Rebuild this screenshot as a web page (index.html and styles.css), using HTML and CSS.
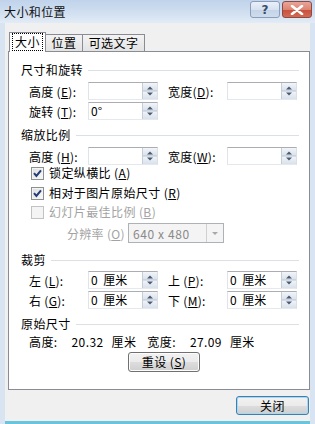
FILE: index.html
```html
<!DOCTYPE html>
<html lang="zh-CN">
<head>
  <meta charset="UTF-8" />
  <title>大小和位置</title>
  <link rel="stylesheet" href="styles.css">
</head>
<body>
  <div class="window">
    <div class="titlebar">
      <span class="title">大小和位置</span>
      <div class="caption-btns">
        <div class="cap help">?</div>
        <div class="cap close">
          <svg width="14" height="10" viewBox="0 0 14 10"><path d="M2 1 L12 9 M12 1 L2 9" stroke="#fff" stroke-width="2.6" stroke-linecap="round"/></svg>
        </div>
      </div>
    </div>

    <div class="client">
      <div class="tabs">
        <div class="tab active"><span class="focus">大小</span></div>
        <div class="tab t2">位置</div>
        <div class="tab t3">可选文字</div>
      </div>

      <div class="panel">
        <div class="group-title"><span>尺寸和旋转</span><i class="line"></i></div>
        <div class="row first">
          <label>高度 (<u>E</u>):</label>
          <div class="spin"><span class="val"></span><span class="arrows"></span></div>
          <label class="second">宽度(<u>D</u>):</label>
          <div class="spin"><span class="val"></span><span class="arrows"></span></div>
        </div>
        <div class="row">
          <label>旋转 (<u>T</u>):</label>
          <div class="spin"><span class="val">0°</span><span class="arrows"></span></div>
        </div>

        <div class="group-title g2"><span>缩放比例</span><i class="line"></i></div>
        <div class="row h-row">
          <label>高度 (<u>H</u>):</label>
          <div class="spin"><span class="val"></span><span class="arrows"></span></div>
          <label class="second">宽度(<u>W</u>):</label>
          <div class="spin"><span class="val"></span><span class="arrows"></span></div>
        </div>
        <div class="check-row cb1"><span class="cbox checked"></span>锁定纵横比 (<u>A</u>)</div>
        <div class="check-row cb2"><span class="cbox checked"></span>相对于图片原始尺寸 (<u>R</u>)</div>
        <div class="check-row cb3 disabled"><span class="cbox"></span>幻灯片最佳比例 (<u>B</u>)</div>
        <div class="res-row disabled">
          <label>分辨率 (<u>O</u>)</label>
          <div class="combo"><span class="val">640 x 480</span><span class="drop"></span></div>
        </div>

        <div class="group-title g3"><span>裁剪</span><i class="line"></i></div>
        <div class="row crop1">
          <label>左 (<u>L</u>):</label>
          <div class="spin"><span class="val">0 厘米</span><span class="arrows"></span></div>
          <label class="second">上 (<u>P</u>):</label>
          <div class="spin"><span class="val">0 厘米</span><span class="arrows"></span></div>
        </div>
        <div class="row crop2">
          <label>右 (<u>G</u>):</label>
          <div class="spin"><span class="val">0 厘米</span><span class="arrows"></span></div>
          <label class="second">下 (<u>M</u>):</label>
          <div class="spin"><span class="val">0 厘米</span><span class="arrows"></span></div>
        </div>

        <div class="group-title g4"><span>原始尺寸</span><i class="line"></i></div>
        <div class="info">
          <span>高度:</span><span class="num">20.32</span><span class="unit">厘米</span>
          <span class="w">宽度:</span><span class="num">27.09</span><span class="unit">厘米</span>
        </div>
        <div class="btn reset">重设 (<u>S</u>)</div>
      </div>

      <div class="footer">
        <div class="btn close-btn">关闭</div>
      </div>
    </div>
  </div>
</body>
</html>
```

FILE: styles.css
```css
* {
  margin: 0;
  padding: 0;
  box-sizing: border-box;
}
body {
  width: 315px;
  height: 424px;
  overflow: hidden;
  font-family: "Noto Sans CJK SC", sans-serif;
  font-size: 12px;
  color: #000;
}
u {
  text-decoration: underline;
}
.window {
  width: 315px;
  height: 424px;
  display: flex;
  flex-direction: column;
  background: #f0f0f0;
  box-shadow: inset 5px 0 #d8e4f2, inset -5px 0 #d8e4f2, inset 0 -3px #69c4de;
}

/* title bar */
.titlebar {
  height: 23px;
  display: flex;
  align-items: flex-start;
  background: linear-gradient(to bottom, #c0d3eb 0%, #d2e0f1 60%, #e3ecf6 100%);
}
.title {
  margin: 4px 0 0 4px;
  line-height: 16px;
  letter-spacing: 0.4px;
  color: #111;
}
.caption-btns {
  margin-left: auto;
  margin-right: 3px;
  margin-top: 1px;
  display: flex;
  gap: 2px;
}
.cap {
  width: 30px;
  height: 17px;
  border-radius: 3px;
  display: flex;
  align-items: center;
  justify-content: center;
}
.cap.help {
  border: 1px solid #8b9db9;
  background: linear-gradient(to bottom, #eaf0f8 0%, #d6e2f0 50%, #c3d3e7 51%, #cfdcec 100%);
  color: #3b4d6b;
  font-family: "DejaVu Sans", sans-serif;
  font-weight: bold;
  font-size: 12px;
}
.cap.close {
  border: 1px solid #8d4a43;
  background: linear-gradient(to bottom, #e9a597 0%, #dd8574 50%, #c84f3c 51%, #d26a55 100%);
}

/* client area */
.client {
  flex: 1;
  padding: 9px 6px 0 8px;
  display: flex;
  flex-direction: column;
}
.tabs {
  height: 19px;
  display: flex;
  align-items: flex-end;
  padding-left: 1px;
}
.tab {
  position: relative;
  height: 17px;
  border: 1px solid #898c95;
  border-bottom: none;
  background: linear-gradient(to bottom, #f3f3f3, #e3e3e3);
  display: flex;
  align-items: center;
  justify-content: center;
  line-height: 14px;
  letter-spacing: 0.4px;
}
.tab.active {
  z-index: 1;
  height: 20px;
  width: 37px;
  margin-bottom: -1px;
  background: #fff;
  padding-bottom: 1px;
}
.tab.t2 {
  width: 37px;
  border-left: none;
}
.tab.t3 {
  width: 62px;
  border-left: none;
}
.focus {
  outline: 1px dotted #000;
  outline-offset: 0;
  padding: 1px 2px;
}

/* tab page */
.panel {
  height: 339px;
  width: 302px;
  border: 1px solid #898c95;
  background: #fff;
  padding-top: 10px;
  display: flex;
  flex-direction: column;
}
.group-title {
  height: 16px;
  display: flex;
  align-items: center;
  padding-left: 12px;
  margin-right: 10px;
  letter-spacing: 0.4px;
  line-height: 16px;
}
.group-title .line {
  flex: 1;
  height: 1px;
  margin-left: 5px;
  background: #dcdfe3;
}
.group-title.g2 { margin-top: 7px; }
.group-title.g3 { margin-top: 9px; }
.group-title.g4 { margin-top: 7px; }

.row {
  height: 18px;
  display: flex;
  align-items: center;
  padding-left: 20px;
  margin-top: 2px;
}
.row.first { margin-top: 4px; }
.row.h-row { margin-top: 4px; }
.row.crop1 { margin-top: 3px; }
.row label {
  width: 59px;
  letter-spacing: 0.3px;
}
.row label.second {
  margin-left: 10px;
}
.spin {
  width: 70px;
  height: 18px;
  border: 1px solid #abadb3;
  border-color: #abadb3 #dbdfe6 #e3e9ef #e2e3ea;
  display: flex;
  align-items: center;
  background: #fff;
}
.spin .val {
  flex: 1;
  padding-left: 2px;
  line-height: 14px;
  word-spacing: 3px;
}
.spin .arrows {
  width: 15px;
  height: 16px;
  border-left: 1px solid #c5cdd8;
  background:
    url("data:image/svg+xml;utf8,<svg xmlns='http://www.w3.org/2000/svg' width='14' height='16'><path d='M4 6.5 L7 3.5 L10 6.5 Z' fill='%234b5a72'/><path d='M4 9.5 L7 12.5 L10 9.5 Z' fill='%234b5a72'/><rect x='0' y='7.5' width='14' height='1' fill='%23b9c4d3'/></svg>") no-repeat center,
    linear-gradient(to bottom, #f2f5f9, #d9e1eb 48%, #f2f5f9 52%, #d9e1eb);
}

.check-row {
  height: 16px;
  display: flex;
  align-items: center;
  padding-left: 22px;
  letter-spacing: 0.4px;
  line-height: 16px;
}
.check-row.cb2 { margin-top: 4px; }
.check-row.cb3 { margin-top: 3px; }
.cbox {
  width: 13px;
  height: 13px;
  margin-right: 5px;
  border: 1px solid #8e8f8f;
  background: linear-gradient(135deg, #dcdcdc, #fbfbfb);
  box-shadow: inset 0 0 0 1px #f4f4f4;
}
.cbox.checked {
  background:
    url("data:image/svg+xml;utf8,<svg xmlns='http://www.w3.org/2000/svg' width='11' height='11'><path d='M2 5.2 L4.4 8 L9 2.4' fill='none' stroke='%23233d7a' stroke-width='2'/></svg>") no-repeat center,
    linear-gradient(135deg, #dcdcdc, #fbfbfb);
}
.disabled {
  color: #a3a3a3;
}
.disabled .cbox {
  border-color: #c2c2c2;
  background: #f4f4f4;
}

.res-row {
  height: 20px;
  margin-top: 3px;
  display: flex;
  align-items: center;
  padding-left: 58px;
  letter-spacing: 0.3px;
}
.res-row label {
  width: 61px;
}
.combo {
  width: 96px;
  height: 20px;
  border: 1px solid #adb2b5;
  background: #f4f4f4;
  display: flex;
  align-items: center;
}
.combo .val {
  flex: 1;
  padding-left: 4px;
  color: #8a8a8a;
  letter-spacing: 0.6px;
}
.combo .drop {
  width: 17px;
  height: 18px;
  border-left: 1px solid #d0d0d0;
  background: url("data:image/svg+xml;utf8,<svg xmlns='http://www.w3.org/2000/svg' width='16' height='18'><path d='M5 8 L11 8 L8 11 Z' fill='%23a8a8a8'/></svg>") no-repeat center, #f4f4f4;
}

.info {
  height: 16px;
  margin-top: 2px;
  padding-left: 20px;
  display: flex;
  align-items: center;
  letter-spacing: 0.4px;
  line-height: 16px;
}
.info .num {
  margin-left: 14px;
}
.info .unit {
  margin-left: 8px;
}
.info .w {
  margin-left: 11px;
}

.btn {
  height: 20px;
  border: 1px solid #707070;
  border-radius: 3px;
  background: linear-gradient(to bottom, #f2f2f2 0%, #ebebeb 50%, #dddddd 51%, #cfcfcf 100%);
  box-shadow: inset 0 0 0 1px #fcfcfc;
  display: flex;
  align-items: center;
  justify-content: center;
  letter-spacing: 0.4px;
  line-height: 14px;
}
.btn.reset {
  width: 72px;
  margin: 2px 0 0 119px;
}
.footer {
  display: flex;
  justify-content: flex-end;
  margin-top: 6px;
}
.btn.close-btn {
  width: 73px;
  height: 19px;
  border-color: #3c7fb1;
  box-shadow: inset 0 0 0 1px #a8d8f2;
  background: linear-gradient(to bottom, #f2f2f2 0%, #ebebeb 50%, #dddddd 51%, #cfcfcf 100%);
}
```
